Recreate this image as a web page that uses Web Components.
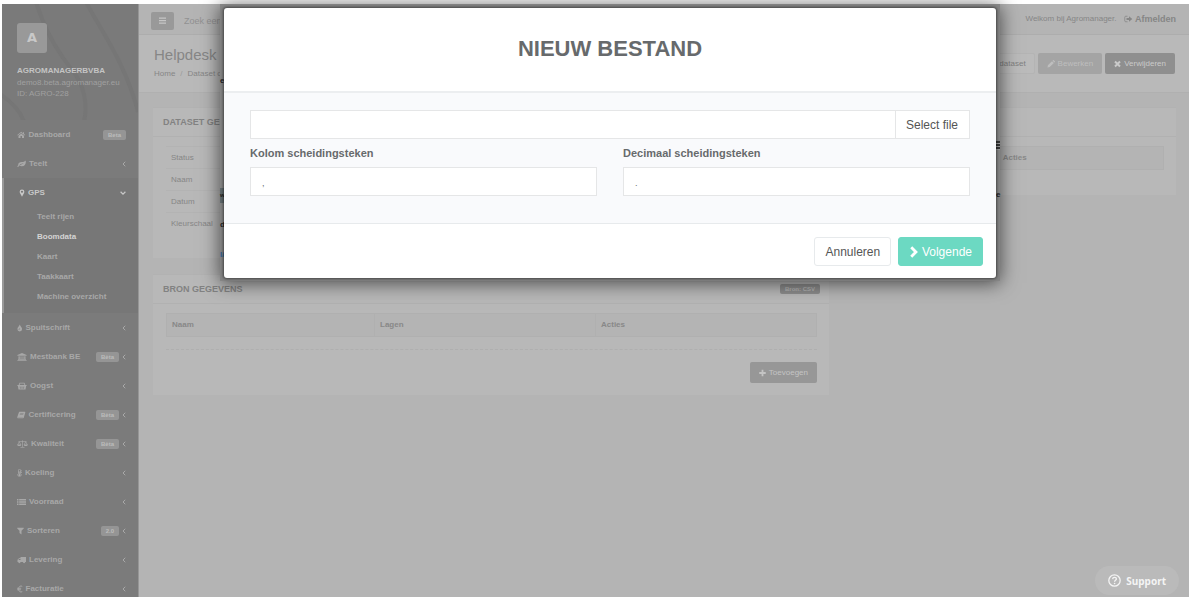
<!DOCTYPE html>
<html lang="nl">
<head>
<meta charset="utf-8">
<title>Agromanager</title>
<style>
  html { background: #fff; }
  body { margin: 4px 0 0 2px; font: 8px/12px "Liberation Sans", Arial, sans-serif; color: #868686; overflow: hidden; }
</style>
</head>
<body>
<agro-app></agro-app>
<script>
const RESET = `*{box-sizing:border-box}
button,input{font:inherit;color:inherit;margin:0;padding:0;border:0;background:none;border-radius:0;outline:0}
a{color:inherit;text-decoration:none}ul,ol{list-style:none;margin:0;padding:0}h1,h2,p{margin:0;font:inherit}`;

function define(name, css, html) {
  customElements.define(name, class extends HTMLElement {
    constructor() {
      super();
      const root = this.attachShadow({ mode: 'open' });
      root.innerHTML = `<style>${RESET}${css}</style>${typeof html === 'function' ? html(this) : html}`;
    }
  });
}

const ICONS = {
  home: [17, '<path d="M8.500 4.800 3 9.300V14h4v-4h3v4h4V9.300zM8.500 1.500 0.500 8l1 1.200 7-5.700 7 5.700 1-1.200-2.500-2.100V2.500h-2v1.800z"/>'],
  leaf: [18, '<path d="M17.500 2c.8 5-1.500 10.500-8 10.500-2 0-3.500-.6-4.800-.9-1.200.6-1.700 2.400-2.700 2.400S.500 13 .6 12.500c.4-1 1.600-1.300 1.900-2.200C2 6 5.500 4.300 9 4.200c3 0 5.500.2 7-2.500.4-.7 1.300-.5 1.500.3zM12.500 6.800C9 6.500 6.500 8 4.700 10.500l.8.500C7.500 8.800 9.500 7.900 12.500 7.800z" fill-rule="evenodd"/>'],
  pin: [12, '<path d="M6 .8A4.700 4.700 0 0 0 1.300 5.500c0 1 .2 1.500.6 2.300L6 15.500l4.100-7.700c.4-.8.6-1.300.6-2.300A4.700 4.700 0 0 0 6 .8zM6 3.300a2.200 2.200 0 1 1 0 4.400 2.200 2.200 0 0 1 0-4.400z" fill-rule="evenodd"/>'],
  drop: [11, '<path d="M5.500 1C5 4 .8 6.800.8 10.200a4.700 4.700 0 0 0 9.400 0C10.200 6.800 6 4 5.500 1zM5.400 9c.1 1.200-.6 1.600-.6 2.600H3c0-1.300 1.500-2 2-3.600z" fill-rule="evenodd"/>'],
  bank: [20, '<path d="M10 0 .800 4v1.500h18.400V4zM3 6.500V12H2v1.300h16V12h-1V6.500h-2.500V12H13V6.500h-2V12H9V6.500H7V12H5.500V6.500zM.8 14.300V16h18.400v-1.700z"/>'],
  basket: [20, '<path d="M5 1.500 3.300 6H.800v2h1l1.200 7h14l1.200-7h1V6h-2.500L15 1.500H5zm1.200 1.700h7.600l1 2.800H5.200zM5.500 9H7l.4 4.300H6zM9.200 9h1.600v4.300H9.200zM13 9h1.500l-.5 4.300h-1.400z" fill-rule="evenodd"/>'],
  book: [17, '<path d="M5 1.500h11c.6.2.7.8.5 1.500l-2.800 10c-.3 1-.8 1.500-2 1.500H2.500C1 14.500.2 13 .6 12L3.700 3c.2-.9.6-1.300 1.300-1.500zm1.400 3-.3 1h7l.3-1zm-.8 2.700-.3 1h7l.3-1zM2 12.300c.1.600.5.800 1 .8h8.700l.3-.8z" fill-rule="evenodd"/>'],
  scale: [22, '<path d="M11 .8v13M3 3.200h16M7 14.800h8M4.500 3.500 1.200 10h6.600zM17.500 3.500 14.200 10h6.600z" fill="none" stroke="currentColor" stroke-width="1.400"/><path d="M.5 9.500h8c-.5 3.500-7.500 3.500-8 0zM13.500 9.500h8c-.5 3.500-7.500 3.500-8 0z"/>'],
  thermo: [10, '<path d="M3 2.500a2 2 0 0 1 4 0V9a3.400 3.400 0 1 1-4 0z" fill="none" stroke="currentColor" stroke-width="1.600"/><path d="M4.300 5h1.400v5a2 2 0 1 1-1.400 0zM8 3h2v1.300H8zM8 6h2v1.300H8z"/>'],
  list: [18, '<path d="M0 2h3v2.400H0zM4.300 2H18v2.400H4.300zM0 5.300h3v2.400H0zM4.300 5.300H18v2.400H4.300zM0 8.600h3V11H0zM4.300 8.600H18V11H4.300zM0 11.900h3v2.300H0zM4.300 11.900H18v2.300H4.300z"/>'],
  filter: [14, '<path d="M.5 1.500h13l.3.900L9 7.500V15l-4-3V7.500L.2 2.400z"/>'],
  truck: [18, '<path d="M18 2H7v2H4.500L1 7.500V12h1.500a2.300 2.300 0 0 0 4.600 0h4.800a2.300 2.300 0 0 0 4.600 0H18zM5 5.300h2V8H2.500z" fill-rule="evenodd"/>'],
  euro: [11, '<path d="M10.500 2.700C7 .8 3.600 2.500 3 8c.6 5.500 4 7.200 7.500 5.300M.3 6.500h8M.3 9.500h7.500" fill="none" stroke="currentColor" stroke-width="1.900"/>'],
  left: [8, '<path d="M6.500 3.500 2 8l4.500 4.500" fill="none" stroke="currentColor" stroke-width="2"/>'],
  down: [12, '<path d="M1.200 5.500 6 10.300l4.800-4.800" fill="none" stroke="currentColor" stroke-width="2.400"/>'],
  right: [13, '<path d="M3 1.800 9.200 8 3 14.200" fill="none" stroke="currentColor" stroke-width="3.800"/>'],
  bars: [14, '<path d="M0 2.500h14v2.200H0zM0 7h14v2.200H0zM0 11.500h14v2.200H0z"/>'],
  exit: [17, '<path d="M7 2.500H3.500a2 2 0 0 0-2 2v7a2 2 0 0 0 2 2H7" fill="none" stroke="currentColor" stroke-width="1.600"/><path d="M10 2.500 16.500 8 10 13.500v-3.300H5V5.800h5z"/>'],
  pencil: [16, '<path d="m1 15 .8-4.500L10 2.300l3.700 3.700-8.200 8.200zM11 1.300l1-1c.5-.4 1-.4 1.500 0L15.700 2.500c.4.500.4 1 0 1.500l-1 1z"/>'],
  times: [14, '<path d="m2 3 10 10M12 3 2 13" fill="none" stroke="currentColor" stroke-width="4"/>'],
  plus: [14, '<path d="M7 1.500v13M.500 8h13" fill="none" stroke="currentColor" stroke-width="3.600"/>'],
  help: [16, '<circle cx="8" cy="8" r="7" fill="none" stroke="currentColor" stroke-width="1.600"/><path d="M5.700 6.300c.2-3 4.800-2.700 4.600 0-.1 1.500-2.200 1.500-2.200 3.200" fill="none" stroke="currentColor" stroke-width="1.600"/><circle cx="8.100" cy="11.700" r="1"/>']
};
customElements.define('agro-icon', class extends HTMLElement {
  constructor() {
    super();
    this.attachShadow({ mode: 'open' });
  }
  connectedCallback() {
    const [w, body] = ICONS[this.getAttribute('name')];
    this.shadowRoot.innerHTML = `<style>:host{display:inline-block;height:var(--icon,8px);flex:none}svg{display:block;height:100%;fill:currentColor}</style>
      <svg viewBox="0 0 ${w} 16" aria-hidden="true">${body}</svg>`;
  }
});

define('agro-badge', `:host{display:block;height:10px;padding:0 5px;border-radius:2px;background:var(--badge,#959595);color:var(--badge-ink,#bcbcbc);font:bold 6px/10px "Liberation Sans",Arial,sans-serif;white-space:nowrap}`, `<slot></slot>`);

define('nav-item', `
:host{display:block}
a{display:flex;align-items:center;height:29px;padding:0 12px 0 15px;font-weight:bold;gap:3px}
.t{flex:1;white-space:nowrap}`,
  el => `<a href="#"><agro-icon name="${el.getAttribute('icon')}"></agro-icon><span class="t"><slot></slot></span><slot name="badge"></slot>${
    el.hasAttribute('leaf') ? '' : `<agro-icon name="${el.hasAttribute('open') ? 'down' : 'left'}"></agro-icon>`}</a>`);

define('agro-sidebar', `
:host{display:block;background:#7b7b7b;color:#a8a8a8;border-right:1px solid #969696;overflow:hidden}
header{height:116px;padding:19px 15px 0;background-color:#7a7a7a}
header{background-image:url("data:image/svg+xml,%3Csvg xmlns='http://www.w3.org/2000/svg' width='136' height='116'%3E%3Cg fill='none' stroke='%23767676' stroke-width='4'%3E%3Cpath d='M34 -2C42 24 54 46 70 66C82 80 86 100 82 118M84 -2C98 25 124 60 136 108M-2 90C10 98 18 106 22 118'/%3E%3C/g%3E%3C/svg%3E")}
.logo{width:30px;height:30px;border-radius:3px;background:#999;color:#c8c8c8;font:bold 13px/29px "DejaVu Sans",sans-serif;text-align:center;margin-bottom:12px}
.name{font-weight:bold;color:#c4c4c4}
.sub{line-height:11px;color:#a0a0a0}
.open{background:#777;border-left:2px solid #999;height:135px}
.open nav-item{color:#c8c8c8}
.open li a{display:block;height:20px;line-height:20px;padding-left:33px;font-weight:bold}
.open li a.on{color:#d4d4d4}`,
`<header><div class="logo">A</div><p class="name">AGROMANAGERBVBA</p><p class="sub">demo8.beta.agromanager.eu</p><p class="sub">ID: AGRO-228</p></header>
<nav>
<nav-item icon="home" leaf>Dashboard<agro-badge slot="badge">Beta</agro-badge></nav-item>
<nav-item icon="leaf">Teelt</nav-item>
<div class="open"><nav-item icon="pin" open>GPS</nav-item>
<ul><li><a href="#">Teelt rijen</a></li><li><a href="#" class="on">Boomdata</a></li><li><a href="#">Kaart</a></li><li><a href="#">Taakkaart</a></li><li><a href="#">Machine overzicht</a></li></ul></div>
<nav-item icon="drop">Spuitschrift</nav-item>
<nav-item icon="bank">Mestbank BE<agro-badge slot="badge">Bèta</agro-badge></nav-item>
<nav-item icon="basket">Oogst</nav-item>
<nav-item icon="book">Certificering<agro-badge slot="badge">Bèta</agro-badge></nav-item>
<nav-item icon="scale">Kwaliteit<agro-badge slot="badge">Bèta</agro-badge></nav-item>
<nav-item icon="thermo">Koeling</nav-item>
<nav-item icon="list">Voorraad</nav-item>
<nav-item icon="filter">Sorteren<agro-badge slot="badge">2.0</agro-badge></nav-item>
<nav-item icon="truck">Levering</nav-item>
<nav-item icon="euro">Facturatie</nav-item>
</nav>`);

define('agro-topbar', `
:host{display:flex;align-items:center;height:31px;padding:3px 13px 0 12px;border-bottom:1px solid #adadad}
.menu{width:23px;height:18px;border-radius:2px;background:#999;color:#c6c6c6;display:grid;place-items:center;--icon:9px}
input{flex:1;margin-left:10px;font-size:9px;line-height:12px;height:18px}
input::placeholder{color:#919191;opacity:1}
.user{display:flex;align-items:center;gap:8px;padding-bottom:4px}
.out{display:flex;align-items:center;gap:2px;font-size:9px;font-weight:bold}`,
`<button class="menu" aria-label="Menu"><agro-icon name="bars"></agro-icon></button><input type="text" placeholder="Zoek een..." aria-label="Zoeken"><div class="user"><span>Welkom bij Agromanager.</span><a class="out" href="#"><agro-icon name="exit"></agro-icon>Afmelden</a></div>`);

define('agro-button', `
:host{display:block}
button{display:flex;align-items:center;gap:3px;height:21px;padding:0 8px;border-radius:2px;background:var(--bg);color:var(--ink,#c6c6c6);border:1px solid var(--line,transparent);white-space:nowrap}`,
  el => `<button type="button">${el.hasAttribute('icon') ? `<agro-icon name="${el.getAttribute('icon')}"></agro-icon>` : ''}<slot></slot></button>`);

define('agro-heading', `
:host{display:flex;justify-content:space-between;height:58px;padding:10px 14px 0 15px;background:#b9b9b9;border-bottom:1px solid #b0b0b0}
h1{font-size:15px;line-height:20px}
ol{display:flex;gap:5px;line-height:16px;margin-top:1px}
.sep{color:#9a9a9a}
.actions{display:flex;gap:3px;margin-top:8px}
.plain{--bg:#bbb;--ink:#808080;--line:#b4b4b4}.edit{--bg:#a4a4a4;--ink:#bebebe}.del{--bg:#8f8f8f;--ink:#cacaca}`,
`<div><h1>Helpdesk</h1><ol><li><a href="#">Home</a></li><li class="sep">/</li><li>Dataset o</li></ol></div>
<div class="actions"><agro-button class="plain">dataset</agro-button><agro-button class="edit" icon="pencil">Bewerken</agro-button><agro-button class="del" icon="times">Verwijderen</agro-button></div>`);

define('agro-panel', `
:host{display:block;background:#b8b8b8;border-top:1px solid #b2b2b2}
header{display:flex;align-items:center;justify-content:space-between;height:29px;padding:0 9px 0 10px;border-bottom:1px solid #b1b1b1}
h2{font-size:9px;font-weight:bold;color:#828282}
.body{padding:9px 12px 12px 13px}`,
`<header><h2><slot name="title"></slot></h2><slot name="tag"></slot></header><div class="body"><slot></slot></div>`);

const TABLE = `table{width:100%;border-collapse:collapse;table-layout:fixed}
th{height:23px;padding:0 5px;text-align:left;background:#b4b4b4;border:1px solid #b0b0b0;color:#888}`;

define('agro-main', `
:host{display:flex;flex-direction:column;background:#b4b4b4;min-width:0}
.cols{display:grid;grid-template-columns:calc(66.6667% - 6px) minmax(0,1fr);gap:13px;padding:14px 13px 0 14px;align-items:start}
.left{display:grid;gap:16px}
dl{margin:0}
dt{height:22px;line-height:22px;padding-left:5px;border-top:1px solid #b3b3b3}
dt:last-child{height:34px}
${TABLE}
.line{border-top:1px dashed #afafaf;margin:12px 0}
.foot{display:flex;justify-content:flex-end;--bg:#979797;--ink:#c4c4c4}
.csv{--badge:#8c8c8c;--badge-ink:#b4b4b4}
.w1{width:32%}.w2{width:34%}.gap{height:13px}`,
`<agro-topbar></agro-topbar><agro-heading></agro-heading>
<div class="cols"><div class="left">
<agro-panel><span slot="title">DATASET GEG</span><dl><dt>Status</dt><dt>Naam</dt><dt>Datum</dt><dt>Kleurschaal</dt></dl></agro-panel>
<agro-panel><span slot="title">BRON GEGEVENS</span><agro-badge class="csv" slot="tag">Bron: CSV</agro-badge>
<table><thead><tr><th class="w1">Naam</th><th class="w2">Lagen</th><th>Acties</th></tr></thead></table>
<div class="line"></div><div class="foot"><agro-button icon="plus">Toevoegen</agro-button></div></agro-panel>
</div>
<agro-panel><table><thead><tr><th style="width:46%"></th><th>Acties</th></tr></thead></table><div class="gap"></div></agro-panel>
</div>`);

define('sep-field', `
:host{display:block;min-width:0}
label{display:block;font-size:11px;font-weight:bold;line-height:28px;color:#676a6c}
input{display:block;width:100%;height:29px;padding:3px 11px 0;border:1px solid #e5e6e7;background:#fff;font-size:9px;color:#676a6c}`,
  el => `<label for="f">${el.getAttribute('label')}</label><input id="f" type="text" value="${el.getAttribute('value')}">`);

define('file-dialog', `
:host{display:block;position:relative;padding:4px 4px 3px;background:#858585;box-shadow:0 2px 18px rgba(0,0,0,.62)}
section{position:relative;background:#fff;border-radius:3px;box-shadow:0 0 3px 1px rgba(0,0,0,.5);color:#676a6c}
header{height:85px;border-bottom:2px solid #eceef0}
h2{font-size:22px;line-height:82px;font-weight:bold;text-align:center}
.body{background:#f9fafc;padding:17px 26px 27px;border-bottom:1px solid #e7eaec}
.file{display:flex;height:29px;border:1px solid #e5e6e7;background:#fff}
.file input{flex:1;min-width:0;padding:0 11px}
.file button{padding:0 11px 0 10px;border-left:1px solid #e5e6e7;font-size:12px;color:#555}
.two{display:grid;grid-template-columns:1fr 1fr;gap:26px}
footer{display:flex;justify-content:flex-end;gap:7px;padding:13px 13px 12px;font-size:12px}
footer button{height:29px;padding:0 10px;border:1px solid #e7eaec;border-radius:3px;display:flex;align-items:center;gap:3px;--icon:12px;color:#555}
footer .next{background:#6cd9c2;border-color:#6cd9c2;color:#fff}
.edge{position:absolute;top:0;bottom:0;width:5px;font-weight:bold;color:#222;font-size:8px;line-height:12px}
.l{left:0}.r{right:0;width:4px}
.edge span{position:absolute;left:0}
.edge .w{top:184px;width:5px;height:15px;background:#5f696c;font-size:6px;line-height:15px}
.edge .rows{top:137px;width:4px;height:9px;background:repeating-linear-gradient(#333 0 2px,#999 2px 3px)}`,
`<div class="edge l" aria-hidden="true"><span style="top:71px">e</span><span class="w">w</span><span style="top:215px">d</span><span style="top:245px;color:#2f5f90">l/</span></div>
<div class="edge r" aria-hidden="true"><span class="rows"></span><span style="top:185px">e</span></div>
<section role="dialog" aria-labelledby="t"><header><h2 id="t">NIEUW BESTAND</h2></header>
<div class="body"><div class="file"><input type="text" aria-label="Bestand"><button type="button">Select file</button></div>
<div class="two"><sep-field label="Kolom scheidingsteken" value=","></sep-field><sep-field label="Decimaal scheidingsteken" value="."></sep-field></div></div>
<footer><button type="button">Annuleren</button><button type="button" class="next"><agro-icon name="right"></agro-icon>Volgende</button></footer></section>`);

define('support-button', `
:host{display:block}
button{display:flex;align-items:center;gap:5px;height:29px;padding:0 13px;border-radius:15px;background:#bababa;color:#f4f4f4;font:bold 10px/14px "Noto Sans",sans-serif;--icon:13px}`,
`<button type="button"><agro-icon name="help"></agro-icon>Support</button>`);

define('agro-app', `
:host{display:grid;grid-template-columns:137px minmax(0,1fr);height:calc(100vh - 4px)}
.overlay{position:absolute;top:4px;left:220px;right:189px}
support-button{position:fixed;right:10px;bottom:2px}
agro-sidebar{min-height:0}`,
`<agro-sidebar></agro-sidebar><agro-main></agro-main><div class="overlay"><file-dialog></file-dialog></div><support-button></support-button>`);
</script>
</body>
</html>
